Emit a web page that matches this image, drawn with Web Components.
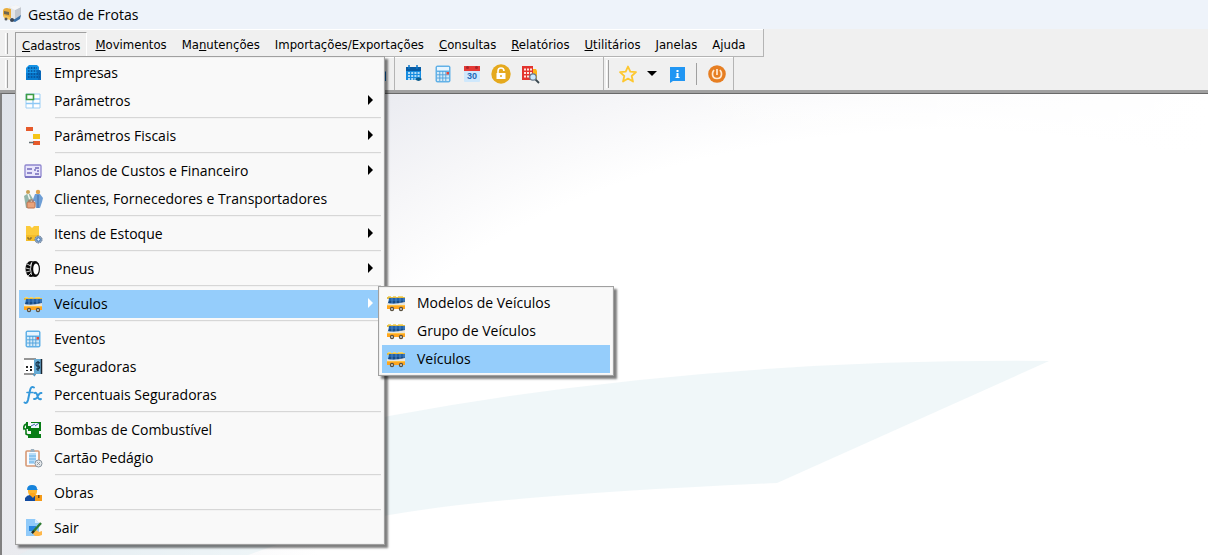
<!DOCTYPE html>
<html lang="pt-BR">
<head>
<meta charset="utf-8">
<title>Gestão de Frotas</title>
<style>
  html, body { height: 100%; margin: 0; }
  body { background: #f0f0f0; color: #000; overflow: hidden; font-family: "Open Sans", "Noto Sans", sans-serif; }
</style>
</head>
<body>
<fleet-window>
  <title-bar slot="title" icon="truck">Gestão de Frotas</title-bar>

  <menu-bar slot="menubar">
    <menu-entry open><u>C</u>adastros
      <menu-panel slot="menu" style="--panel-width: 370px">
        <menu-item icon="company">Empresas</menu-item>
        <menu-item icon="table" more>Parâmetros</menu-item>
        <menu-rule></menu-rule>
        <menu-item icon="tree" more>Parâmetros Fiscais</menu-item>
        <menu-rule></menu-rule>
        <menu-item icon="plan" more>Planos de Custos e Financeiro</menu-item>
        <menu-item icon="people">Clientes, Fornecedores e Transportadores</menu-item>
        <menu-rule></menu-rule>
        <menu-item icon="box" more>Itens de Estoque</menu-item>
        <menu-rule></menu-rule>
        <menu-item icon="tire" more>Pneus</menu-item>
        <menu-rule></menu-rule>
        <menu-item icon="bus" more active>Veículos
          <menu-panel slot="submenu" style="--panel-width: 236px">
            <menu-item icon="bus">Modelos de Veículos</menu-item>
            <menu-item icon="bus">Grupo de Veículos</menu-item>
            <menu-item icon="bus" active>Veículos</menu-item>
          </menu-panel>
        </menu-item>
        <menu-rule></menu-rule>
        <menu-item icon="calculator">Eventos</menu-item>
        <menu-item icon="insurer">Seguradoras</menu-item>
        <menu-item icon="fx">Percentuais Seguradoras</menu-item>
        <menu-rule></menu-rule>
        <menu-item icon="pump">Bombas de Combustível</menu-item>
        <menu-item icon="clipboard">Cartão Pedágio</menu-item>
        <menu-rule></menu-rule>
        <menu-item icon="worker">Obras</menu-item>
        <menu-rule></menu-rule>
        <menu-item icon="exit">Sair</menu-item>
      </menu-panel>
    </menu-entry>
    <menu-entry><u>M</u>ovimentos</menu-entry>
    <menu-entry>Ma<u>n</u>utenções</menu-entry>
    <menu-entry>Importações/Exportações</menu-entry>
    <menu-entry><u>C</u>onsultas</menu-entry>
    <menu-entry><u>R</u>elatórios</menu-entry>
    <menu-entry><u>U</u>tilitários</menu-entry>
    <menu-entry><u>J</u>anelas</menu-entry>
    <menu-entry>A<u>j</u>uda</menu-entry>
  </menu-bar>

  <tool-bar slot="tools" grip style="--bar-width: 395px; --bar-justify: flex-end">
    <tool-button icon="company" label="Empresas"></tool-button>
  </tool-bar>
  <tool-bar slot="tools" style="--bar-width: 209px">
    <tool-button icon="agenda" label="Agenda"></tool-button>
    <tool-button icon="calculator" label="Calculadora"></tool-button>
    <tool-button icon="calendar" label="Calendário"></tool-button>
    <tool-button icon="lock" label="Bloquear"></tool-button>
    <tool-button icon="search" label="Pesquisar"></tool-button>
  </tool-bar>
  <tool-bar slot="tools" grip>
    <tool-button icon="star" label="Favoritos"></tool-button>
    <tool-button icon="down" label="Lista de favoritos" narrow></tool-button>
    <tool-button icon="info" label="Informações"></tool-button>
    <tool-divider></tool-divider>
    <tool-button icon="power" label="Encerrar"></tool-button>
  </tool-bar>

  <desktop-art></desktop-art>
</fleet-window>

<script>
const BUS = `<path d="M1 4h18v2H1z" fill="#e3bd45"/><path d="M2 3h3v1H2zM7 3h3v1H7zM12 3h5v1h-5z" fill="#f2d675"/><path d="M3 5h16v7H2z" fill="#2261a8"/><path d="M3 8h16v2H2z" fill="#174b85"/><path d="M6 5v6M10 5v6M14 5v6M18 5v6" stroke="#4e89c8"/><path d="M1 10q7 2 18-1v4H1z" fill="#e9e5dc"/><path d="M1 12h18v4H1z" fill="#ffa51f"/><path d="M1 12h18v1H1z" fill="#ffc342"/><circle cx="6" cy="16" r="2.2" fill="#59503f"/><circle cx="15" cy="16" r="2.2" fill="#59503f"/><circle cx="6" cy="16" r=".9" fill="#ddd"/><circle cx="15" cy="16" r=".9" fill="#ddd"/>`;
const ICONS = {
  truck: `<path d="M7 3l7-2 5 2v9l-6 4-6-2z" fill="#e4e6e9"/><path d="M13 6l6-3v9l-6 4z" fill="#c3c8d0"/><path d="M7 3l7-2 5 2-6 3z" fill="#f5f6f8"/><path d="M1 7q0-3 4-3l4 1v9l-4 1-4-3z" fill="#e9ad3c"/><path d="M2 7l5 1v3l-5-1z" fill="#6e674f"/><path d="M1 11l7 2v3l-6-2z" fill="#f7c75c"/><path d="M8 16l5-1 6-4-1 4-5 3z" fill="#386fa8"/><circle cx="10" cy="16" r="2" fill="#3c4654"/><circle cx="4" cy="15" r="1.5" fill="#5b5a58"/>`,
  company: `<path d="M4 4l2-2h8l2 2v13H3V5z" fill="#1593e6"/><path d="M14 7h3l1 1v9h-5z" fill="#0867b8"/><path d="M3 10h12v7H3z" fill="#087bd0"/><path d="M5 5h9M5 8h9M5 11h12M5 14h12" stroke="#074e91" stroke-width="1.4" stroke-dasharray="1.6 1.2"/>`,
  table: `<path d="M3 3h14v14H3z" fill="#fff" stroke="#9ccff5"/><path d="M10 3v14M3 8h14M3 12.500h14" stroke="#8cc8f5" stroke-width="1.3"/><path d="M3.500 3.500h7v5h-7z" fill="#fff" stroke="#3f9d45" stroke-width="1.600"/>`,
  tree: `<path d="M3 1h7v4H3z" fill="#e65a2b"/><path d="M10 8h7v5h-7z" fill="#f5c518"/><path d="M10 15h7v4h-7z" fill="#e65a2b"/><path d="M6 16.500h5" stroke="#636e72" stroke-width="1.500"/>`,
  plan: `<rect x="2" y="4" width="16" height="12" rx="1" fill="#e9e6fb" stroke="#8e86ce" stroke-width="1.300"/><path d="M2 16h16" stroke="#7d76c2" stroke-width="2"/><path d="M4 8h5M4 12h5M12 7h4M14 10h2M12 13h4M12 8v2" stroke="#716abb" stroke-width="1.400"/>`,
  people: `<circle cx="5" cy="3" r="2" fill="#c9a052"/><circle cx="15" cy="3" r="2.200" fill="#dda24e"/><path d="M1 7l3-2h3l3 5-2 2v7H3z" fill="#92b5a9"/><path d="M5 5l2 6" stroke="#eef4ee" stroke-width="1.500"/><path d="M12 5h5l3 4-1 4-2 6h-4l-1-7-3 1z" fill="#6e9ed5"/><path d="M15 6v13" stroke="#416ea8"/><rect x="4" y="13" width="8" height="6" rx="1" fill="#e8a37b" stroke="#bd7350"/><path d="M6 13v-2h4v2" fill="none" stroke="#9f6b55"/>`,
  box: `<path d="M3 2h4l2 2 2-2h5v15H3z" fill="#fccb3b"/><path d="M3 11h13v6H3z" fill="#f4bd29"/><path d="M5 13v2h3v-2" stroke="#765f2a" fill="none"/><circle cx="15.500" cy="15.500" r="3.600" fill="#8fa6c0" stroke="#6c7f99" stroke-dasharray="1.500 1"/><circle cx="15.500" cy="15.500" r="1.700" fill="#e8f2ff" stroke="#3673b5"/>`,
  tire: `<ellipse cx="8" cy="10" rx="5.500" ry="8" fill="#080808"/><ellipse cx="12" cy="10" rx="5" ry="8" fill="#080808"/><ellipse cx="13" cy="10" rx="2.800" ry="5.500" fill="#fff"/><path d="M4 5l4 2M3 9l4 1M3 13l4-1M5 17l3-3M9 3l-2 4" stroke="#ddd" stroke-width=".9"/><path d="M8.500 4q-2 6 0 12" stroke="#fff" fill="none" stroke-width=".8"/>`,
  bus: BUS,
  calculator: `<rect x="2.500" y="1.500" width="15" height="17" rx="2" fill="#62b1e7"/><rect x="4" y="3" width="12" height="3.500" fill="#e7f5ff"/><path d="M4 8h12v9H4z" fill="#d5eaf7"/><path d="M6.800 7v10M9.800 7v10M12.800 7v10M4 10.800h12M4 14h12" stroke="#4da0db" stroke-width=".9"/><path d="M13.500 8H16v2.500h-2.500z" fill="#e4463a"/>`,
  insurer: `<path d="M1 2h12M1 17h12" stroke="#333"/><path d="M1 3h10v13H1z" fill="#fff"/><path d="M3 9h2v2H3zM3 13h2v1H3zM7 9h2v2H7zM7 12h2v2H7z" fill="#222"/><path d="M11 2h8v15h-8z" fill="#65abd5"/><path d="M18.500 2v15" stroke="#1d2731" stroke-width="1.500"/><path d="M17 6q-4-2-4 1t3 2q2 3-3 3M15 4v10" fill="none" stroke="#17354c" stroke-width="1.200"/><path d="M10 17l2 2" stroke="#4e97c5" stroke-width="1.500"/>`,
  fx: `<g fill="none" stroke="#3498db" stroke-linecap="round"><path d="M11 2.500q-3-2-4 3L5 15q-1 4-3.500 2.500" stroke-width="2"/><path d="M4 7.500h6" stroke-width="1.600"/><path d="M11.500 8q2-1 3 3t3.500 3M18.500 8q-2-.5-3.500 3t-4 3" stroke-width="1.900"/></g>`,
  pump: `<path d="M3 2h2v4h3V2h10v9h-2v3h2v4H5v-4h3v-3H5V9H3z" fill="#087d16"/><path d="M8 3h8v5H8z" fill="#edf8ff"/><path d="M8 6l4-2M12 6l4-3" stroke="#3e65a5"/><path d="M3 4Q0 6 1 9q2-1 2 2v3l2 1" fill="none" stroke="#087d16" stroke-width="1.600"/>`,
  clipboard: `<rect x="3" y="3" width="13" height="15" rx="1" fill="#f8fbff" stroke="#d69873" stroke-width="1.600"/><path d="M6 5h7v11H6z" fill="#b8dcf7"/><path d="M7 4l1-3h3l1 3z" fill="#9eb0bf"/><path d="M6 8h7M6 11h7M6 14h5" stroke="#62aee5"/><circle cx="15.500" cy="15.500" r="3.500" fill="#e6eaed" stroke="#89949e"/><path d="M14 14l3 3M17 14l-3 3" stroke="#8b8e90" stroke-width=".8"/>`,
  worker: `<path d="M5 6h9v3q-1 5-4.500 5T5 9z" fill="#ffb52f"/><path d="M4 7q0-5 5-5t5 4l1 1z" fill="#1784dc"/><path d="M2 18v-3q2-3 5-3l3 2 3-2q3 1 4 3v3z" fill="#124ba0"/><path d="M7 12l3 3 2-3v-2H7z" fill="#ffa61d"/><path d="M12 12h7v6h-7z" fill="#f59b18"/><path d="M15 12h1.500v3H15z" fill="#704515"/>`,
  exit: `<path d="M3 1h9l4 4v13H3z" fill="#90caf9"/><path d="M12 1v4h4z" fill="#d9eeff"/><path d="M6 8h7v5H6z" fill="#2686df"/><path d="M10 13l3-1 3 2 3-1v4l-3 1h-4l-2-2z" fill="#ffb84a"/><path d="M9 15L18 5" stroke="#2e7b32" stroke-width="2.400"/><path d="M9 15l2-2" stroke="#222" stroke-width="1.800"/>`,
  agenda: `<path d="M2 3h15v13H2z" fill="#168ce0"/><path d="M2 3h15v4H2z" fill="#075ca5"/><path d="M5 1v4M13 1v4" stroke="#0875c9" stroke-width="1.500"/><path d="M4 9h12M4 12h12M4 15h9" stroke="#e3f5ff" stroke-width="1.600" stroke-dasharray="2 1.200"/><path d="M11 15q3.500-3 7 0-3.500 4-7 0z" fill="#0b5c8d"/>`,
  calendar: `<rect x="2" y="2" width="16" height="16" rx="1" fill="#cfe8fc"/><path d="M2 2h16v5H2z" fill="#e53935"/><circle cx="5.500" cy="3.500" r="1.500" fill="#a9252a"/><circle cx="14.500" cy="3.500" r="1.500" fill="#a9252a"/><text x="10" y="15" text-anchor="middle" font-family="Liberation Sans, sans-serif" font-weight="700" font-size="9" fill="#1f6ab8">30</text>`,
  lock: `<circle cx="10" cy="10" r="9.700" fill="#e5a91d"/><path d="M5.500 9h9v6h-9z" fill="#fff"/><path d="M7 9V7q0-3 3-3t3 3" fill="none" stroke="#fff" stroke-width="1.600"/><path d="M10 11v2" stroke="#e5a91d" stroke-width="1.500"/>`,
  search: `<path d="M13 5h3l1 2v8h-4z" fill="#ffb515"/><path d="M2 2h11v14H2z" fill="#e3332d"/><path d="M4 5.500h8M4 9h8M4 12.500h8" stroke="#ffe4df" stroke-width="1.800" stroke-dasharray="2 1"/><path d="M15 15l4 4" stroke="#394850" stroke-width="1.800"/><circle cx="13" cy="13" r="3.200" fill="#c9e8ff" stroke="#68798a" stroke-width="1.200"/>`,
  star: `<path d="M10 2.500l2.300 5.200 5.700.5-4.300 3.800 1.300 5.600-5-3-5 3L6.300 12 2 8.200l5.700-.5z" fill="none" stroke="#fdc72f" stroke-width="1.800" stroke-linejoin="round"/>`,
  down: `<path d="M5 7h10l-5 5z" fill="#000"/>`,
  info: `<path d="M3 3h15v14H6l-3 2z" fill="#2196f3"/><path d="M9.500 6h2v2h-2zM9.500 9h2v4h1v1h-4v-1h1z" fill="#fff"/>`,
  power: `<circle cx="10" cy="10" r="8.800" fill="#e67e22"/><path d="M7 6q-1.500 2-1.500 4 0 4.500 4.500 4.500t4.500-4.500q0-2-1.500-4M10 5v6" fill="none" stroke="#ffe9d2" stroke-width="1.700"/>`
};

function define(name, html, setup) {
  const template = document.createElement('template');
  template.innerHTML = html;
  customElements.define(name, class extends HTMLElement {
    static get observedAttributes() { return ['name']; }
    constructor() {
      super();
      this.attachShadow({ mode: 'open' }).append(template.content.cloneNode(true));
    }
    connectedCallback() { if (setup) setup(this, this.shadowRoot); }
    attributeChangedCallback() { if (setup) setup(this, this.shadowRoot); }
  });
}

define('app-icon', `
  <style>:host { display: block; width: 20px; height: 20px; flex: none; } svg { display: block; }</style>
  <svg width="20" height="20" viewBox="0 0 20 20" aria-hidden="true"></svg>`,
  (host, root) => { root.querySelector('svg').innerHTML = ICONS[host.getAttribute('name')] || ''; });

define('title-bar', `
  <style>
    :host { display: flex; align-items: center; gap: 6px; height: 29px; padding-left: 2px; background: #eef3fa; font-size: 14px; line-height: 20px; }
    h1 { margin: 0; font: inherit; }
    app-icon { margin-bottom: 2px; }
  </style>
  <app-icon></app-icon><h1><slot></slot></h1>`,
  (host, root) => root.querySelector('app-icon').setAttribute('name', host.getAttribute('icon')));

const GRIP = `.grip { width: 3px; border-left: 1px solid #fff; border-right: 1px solid #a0a0a0; flex: none; box-sizing: border-box; }`;

define('menu-bar', `
  <style>
    :host { display: flex; }
    nav { display: flex; gap: 1px; height: 28px; box-sizing: border-box; padding: 3px 10px 0 5px; border: 1px solid #b4b4b4; border-width: 0 1px 1px 0; box-shadow: inset 0 1px #fff; }
    ${GRIP}
    .grip { margin: 1px 6px 2px 0; }
  </style>
  <nav><span class="grip"></span><slot></slot></nav>`);

define('menu-entry', `
  <style>
    :host { display: block; position: relative; }
    button { display: block; height: 24px; margin: 0; padding: 0 6px; border: 1px solid transparent; border-bottom: 0; background: none; color: inherit; font: 13px/24px "DejaVu Sans Condensed", "DejaVu Sans", sans-serif; font-stretch: condensed; white-space: nowrap; }
    :host([open]) button { border-color: #a0a0a0 #fff #fff #a0a0a0; line-height: 26px; }
    .menu { position: absolute; top: 24px; left: 0; z-index: 10; }
  </style>
  <button type="button"><slot></slot></button>
  <div class="menu"><slot name="menu"></slot></div>`);

define('menu-panel', `
  <style>
    :host { display: block; box-sizing: border-box; width: var(--panel-width); padding: 2px 3px; border: 1px solid #a0a0a0; background: #f9f9f9; box-shadow: inset 0 0 0 1px #f0f0f0, 3px 3px 2px rgba(0, 0, 0, .5); font-family: "Open Sans", "Noto Sans", sans-serif; }
  </style>
  <slot></slot>`);

define('menu-item', `
  <style>
    :host { display: block; position: relative; }
    button { display: flex; align-items: center; gap: 11px; width: 100%; height: 28px; margin: 0; padding: 0 8px 0 4px; border: 0; background: none; color: #000; font: 14px/20px "Open Sans", "Noto Sans", sans-serif; text-align: left; white-space: nowrap; }
    .label { flex: 1; }
    .more { display: none; width: 5px; height: 10px; margin-bottom: 2px; fill: #000; }
    :host([more]) .more { display: block; }
    :host([active]) button { background: #95cdfb; }
    :host([active]) .more { fill: #fff; }
    .submenu { position: absolute; top: -4px; left: 359px; z-index: 1; }
  </style>
  <button type="button"><app-icon></app-icon><span class="label"><slot></slot></span><svg class="more" viewBox="0 0 5 10" aria-hidden="true"><path d="M0 0l5 5-5 5z"/></svg></button>
  <div class="submenu"><slot name="submenu"></slot></div>`,
  (host, root) => root.querySelector('app-icon').setAttribute('name', host.getAttribute('icon')));

define('menu-rule', `
  <style>:host { display: block; height: 2px; margin: 2px 0 3px 36px; box-sizing: border-box; border-top: 1px solid #d7d7d7; background: #f3f3f3; }</style>`);

define('tool-bar', `
  <style>
    :host { display: flex; box-sizing: border-box; width: var(--bar-width, auto); justify-content: var(--bar-justify, flex-start); align-items: center; padding: 0 2px; border-right: 1px solid #b4b4b4; box-shadow: inset 0 1px #fff; }
    ${GRIP}
    .grip { display: none; height: 28px; margin: 0 auto 0 2px; }
    :host([grip]) .grip { display: block; }
    :host([grip]) { padding-left: 0; }
    .items { display: flex; align-items: center; padding-left: 2px; }
    :host([grip]) .items { padding-left: 4px; }
    :host(:first-of-type) .grip { margin-left: 5px; }
  </style>
  <span class="grip"></span><div class="items" role="toolbar"><slot></slot></div>`);

define('tool-button', `
  <style>
    :host { display: block; }
    button { display: grid; place-items: center; width: 29px; height: 28px; margin: 0; padding: 0; border: 0; background: none; }
    :host([narrow]) button { width: 20px; }
  </style>
  <button type="button"><app-icon></app-icon></button>`,
  (host, root) => {
    root.querySelector('button').setAttribute('aria-label', host.getAttribute('label'));
    root.querySelector('app-icon').setAttribute('name', host.getAttribute('icon'));
  });

define('tool-divider', `<style>:host { display: block; width: 1px; height: 22px; margin: 0 5px; background: #a0a0a0; }</style>`);

define('desktop-art', `
  <style>
    :host { display: block; height: 100%; overflow: hidden; background: linear-gradient(to right, transparent 55%, #fff), radial-gradient(640px 370px at 950px 406px, #fff 100%, #f6f6f8 119%, #ecedf2 138%, #e9eaee 150%, #dfe3ea 185%); }
    svg { display: block; }
  </style>
  <svg width="1060" height="480" viewBox="0 0 1060 480" aria-hidden="true">
    <path d="M0 470Q180 372 387 322Q700 264 1047 267L775 389Q500 401 387 421Q290 440 200 480H0z" fill="#e1eff3" fill-opacity=".5"/>
  </svg>`);

define('fleet-window', `
  <style>
    :host { display: flex; flex-direction: column; min-height: 100vh; background: #f0f0f0; }
    .tools { display: flex; height: 33px; }
    main { flex: 1 1 0; min-height: 0; overflow: hidden; border-top: 1px solid #696969; border-left: 2px solid #808080; box-shadow: 0 -3px #a0a0a0; margin-top: 3px; }
  </style>
  <slot name="title"></slot>
  <slot name="menubar"></slot>
  <div class="tools"><slot name="tools"></slot></div>
  <main><slot></slot></main>`);
</script>
</body>
</html>
